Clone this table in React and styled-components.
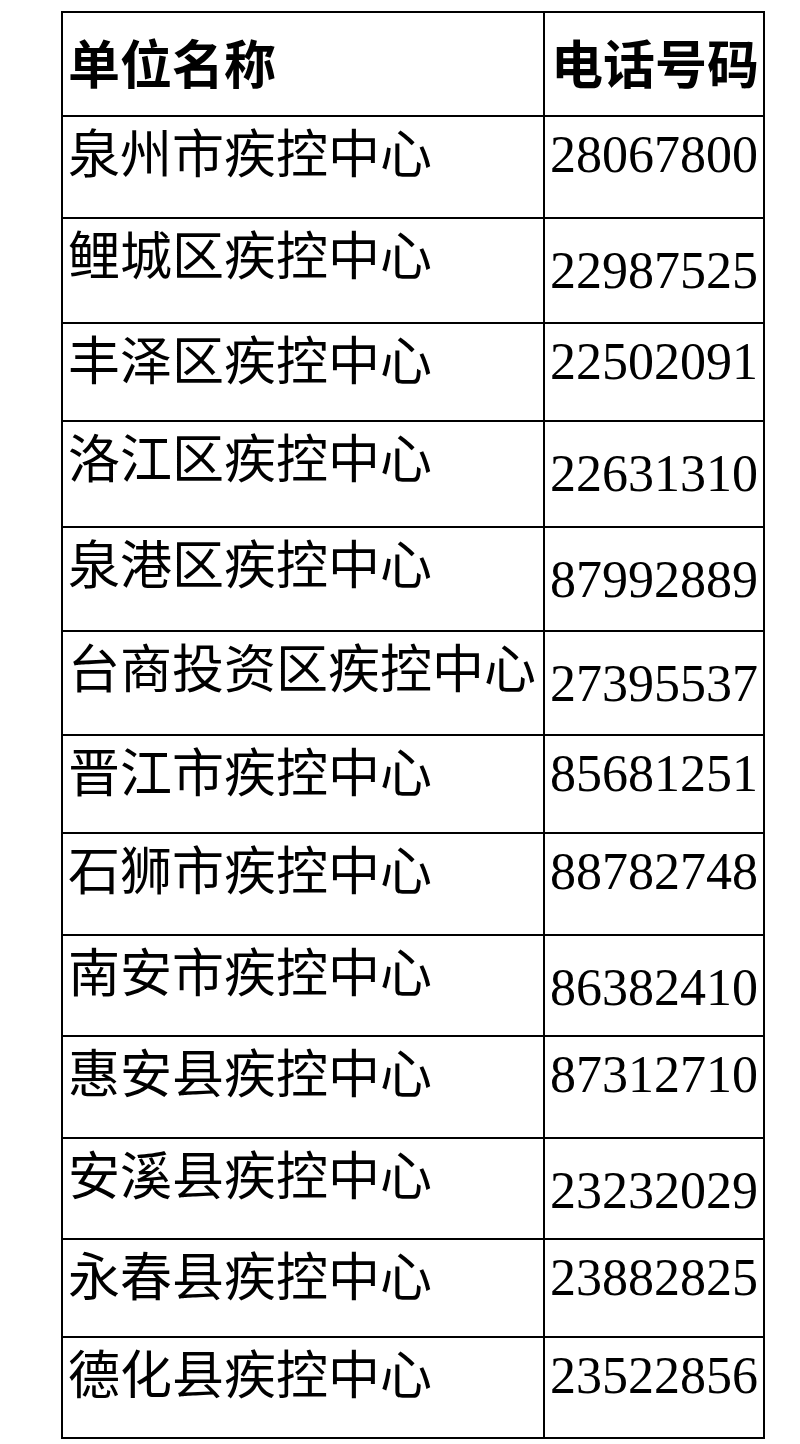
import React from 'react';
import styled, { createGlobalStyle } from 'styled-components';

const GlobalStyle = createGlobalStyle`
    html, body {
        margin: 0;
        padding: 0;
        background: #ffffff;
    }
`;

const Page = styled.div`
    width: 800px;
    height: 1444px;
    padding: 11px 0 0 61px;
    box-sizing: border-box;
    background: #ffffff;
`;

const Table = styled.table`
    border-collapse: collapse;
    table-layout: fixed;
    width: 704px;
    color: #000;
`;

const Row = styled.tr`
    height: ${props => props.$h}px;
`;

const Cell = styled.td`
    border: 2.5px solid #000;
    vertical-align: top;
    padding: 0;
    overflow: visible;
    white-space: nowrap;
`;

const HeadCell = styled(Cell)`
    font-family: "Noto Sans CJK SC", "Noto Sans", sans-serif;
    font-weight: 700;
    font-size: 52px;
    line-height: 1;
    padding: 23px 0 0 ${props => props.$left}px;
`;

const NameCell = styled(Cell)`
    font-family: "Noto Sans CJK SC", "Noto Sans", sans-serif;
    font-weight: 400;
    font-size: 52px;
    line-height: 1;
    padding: 8px 0 0 5px;
`;

const PhoneCell = styled(Cell)`
    font-family: "Liberation Serif", "Times New Roman", serif;
    font-size: 52px;
    line-height: 1;
    padding: ${props => (props.$low ? 26 : 12)}px 0 0 5px;
`;

const rows = [
    { name: '泉州市疾控中心', phone: '28067800', h: 102 },
    { name: '鲤城区疾控中心', phone: '22987525', h: 105, low: true },
    { name: '丰泽区疾控中心', phone: '22502091', h: 98 },
    { name: '洛江区疾控中心', phone: '22631310', h: 106, low: true },
    { name: '泉港区疾控中心', phone: '87992889', h: 104, low: true },
    { name: '台商投资区疾控中心', phone: '27395537', h: 104, low: true },
    { name: '晋江市疾控中心', phone: '85681251', h: 98 },
    { name: '石狮市疾控中心', phone: '88782748', h: 102 },
    { name: '南安市疾控中心', phone: '86382410', h: 101, low: true },
    { name: '惠安县疾控中心', phone: '87312710', h: 102 },
    { name: '安溪县疾控中心', phone: '23232029', h: 101, low: true },
    { name: '永春县疾控中心', phone: '23882825', h: 98 },
    { name: '德化县疾控中心', phone: '23522856', h: 101 },
];

function App() {
    return (
        <>
            <GlobalStyle />
            <Page>
                <Table>
                    <colgroup>
                        <col style={{ width: 482 }} />
                        <col style={{ width: 220 }} />
                    </colgroup>
                    <tbody>
                        <Row $h={104}>
                            <HeadCell $left={5}>单位名称</HeadCell>
                            <HeadCell $left={6}>电话号码</HeadCell>
                        </Row>
                        {rows.map(row => (
                            <Row key={row.phone} $h={row.h}>
                                <NameCell>{row.name}</NameCell>
                                <PhoneCell $low={row.low}>{row.phone}</PhoneCell>
                            </Row>
                        ))}
                    </tbody>
                </Table>
            </Page>
        </>
    );
}

export default App;
